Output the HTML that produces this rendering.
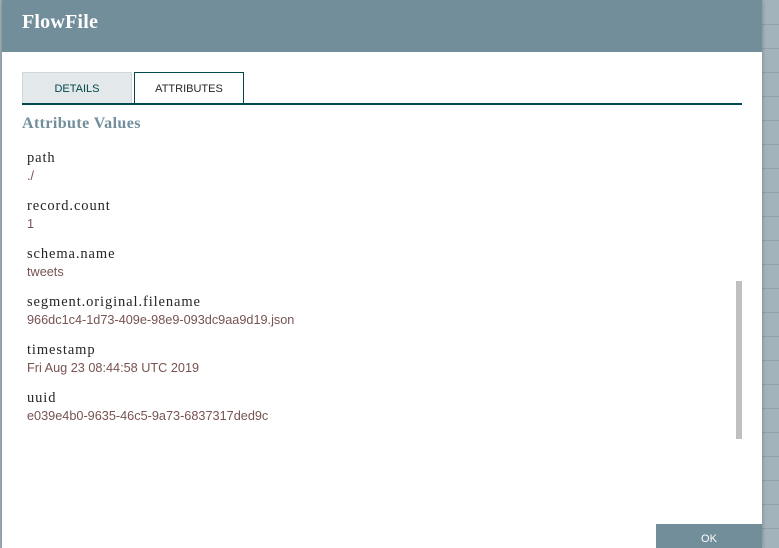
<!DOCTYPE html>
<html><head><style>
html,body{margin:0;width:779px;height:548px;overflow:hidden;}
body{background:#a3b3bb;position:relative;font-family:"Liberation Sans",sans-serif;}
.bgl{position:absolute;left:762px;width:17px;height:1px;background:#8fa1aa;}
.dlg{position:absolute;left:2px;top:0;width:760px;height:548px;background:#fff;box-shadow:0 0 4px rgba(0,0,0,.3);overflow:hidden;}
.hdr{position:absolute;left:0;top:0;width:760px;height:52px;background:#728e9b;}
.hdr span{position:absolute;left:20px;top:11px;font-family:"Liberation Serif",serif;font-weight:bold;font-size:20px;color:#fff;letter-spacing:0.2px;}
.tab{position:absolute;top:72px;height:32px;box-sizing:border-box;font-size:11px;text-align:center;line-height:32px;}
.t1{left:20px;width:110px;background:#e3e8eb;border:1px solid #cfd7db;border-bottom:none;color:#004849;}
.t2{left:132px;width:110px;background:#fff;border:1px solid #004849;border-bottom:none;color:#262626;height:33px;}
.line{position:absolute;left:20px;top:103px;width:720px;height:2px;background:#004849;}
.title{position:absolute;left:20px;top:115px;font-family:"Liberation Serif",serif;font-weight:bold;font-size:16px;letter-spacing:0.4px;color:#728e9b;}
.row{position:absolute;left:25px;}
.n{font-family:"Liberation Serif",serif;font-size:14.5px;letter-spacing:0.9px;color:#262626;height:19px;line-height:21px;}
.v{font-size:12.7px;color:#775351;height:19px;line-height:19px;}
.sb{position:absolute;left:734px;top:281px;width:6px;height:158px;background:#c0c0c0;}
.ok{position:absolute;left:654px;top:524px;width:106px;height:24px;background:#728e9b;color:#fff;font-size:11px;text-align:center;line-height:30px;}
</style></head><body>
<div class="bgl" style="top:24px"></div><div class="bgl" style="top:48px"></div><div class="bgl" style="top:72px"></div><div class="bgl" style="top:96px"></div><div class="bgl" style="top:120px"></div><div class="bgl" style="top:144px"></div><div class="bgl" style="top:168px"></div><div class="bgl" style="top:192px"></div><div class="bgl" style="top:216px"></div><div class="bgl" style="top:240px"></div><div class="bgl" style="top:264px"></div><div class="bgl" style="top:288px"></div><div class="bgl" style="top:312px"></div><div class="bgl" style="top:336px"></div><div class="bgl" style="top:360px"></div><div class="bgl" style="top:384px"></div><div class="bgl" style="top:408px"></div><div class="bgl" style="top:432px"></div><div class="bgl" style="top:456px"></div><div class="bgl" style="top:480px"></div><div class="bgl" style="top:504px"></div><div class="bgl" style="top:528px"></div>
<div class="dlg">
<div class="hdr"><span>FlowFile</span></div>
<div class="tab t1">DETAILS</div>
<div class="tab t2">ATTRIBUTES</div>
<div class="line"></div>
<div class="title">Attribute Values</div>
<div class="row" style="top:148px"><div class="n">path</div><div class="v">./</div></div>
<div class="row" style="top:196px"><div class="n">record.count</div><div class="v">1</div></div>
<div class="row" style="top:244px"><div class="n">schema.name</div><div class="v">tweets</div></div>
<div class="row" style="top:292px"><div class="n">segment.original.filename</div><div class="v">966dc1c4-1d73-409e-98e9-093dc9aa9d19.json</div></div>
<div class="row" style="top:340px"><div class="n">timestamp</div><div class="v">Fri Aug 23 08:44:58 UTC 2019</div></div>
<div class="row" style="top:388px"><div class="n">uuid</div><div class="v">e039e4b0-9635-46c5-9a73-6837317ded9c</div></div>
<div class="sb"></div>
<div class="ok">OK</div>
</div>
</body></html>
